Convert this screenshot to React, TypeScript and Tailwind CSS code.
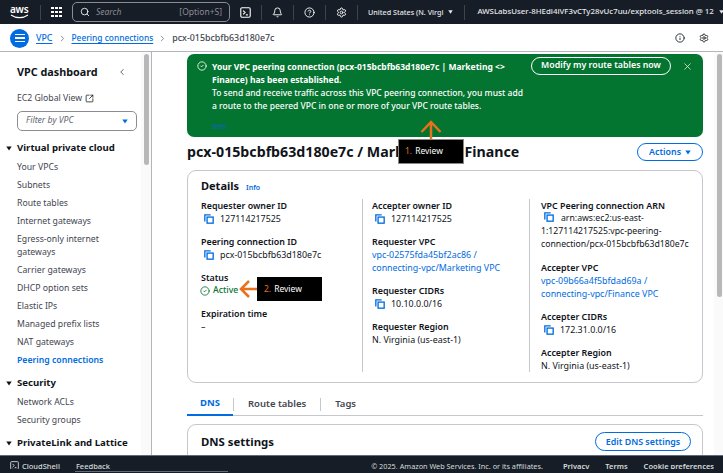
import React from 'react';
import { Bell, ChevronLeft, ChevronRight, CircleCheck, CircleHelp, Info, Search, Settings, SquareArrowOutUpRight, X } from 'lucide-react';

const Caret = ({ className = '' }: { className?: string }) => (
  <svg viewBox="0 0 10 8" className={className} fill="currentColor">
    <path d="M0.5 0.5h9L5 7.5z" />
  </svg>
);

const CopyIcon = () => (
  <svg viewBox="0 0 12 12" className="w-[10px] h-[10px] shrink-0 text-[#006ce0]" fill="none" stroke="currentColor" strokeWidth="1.6">
    <path d="M1 9V1h7" />
    <rect x="3.7" y="3.7" width="7.3" height="7.3" />
  </svg>
);

const TerminalIcon = ({ className = '' }: { className?: string }) => (
  <svg viewBox="0 0 14 14" className={className} fill="none" stroke="currentColor" strokeWidth="1.4">
    <rect x="1" y="1" width="12" height="12" rx="1.5" />
    <path d="M4 4.5 6.5 7 4 9.5M7.5 10H10" />
  </svg>
);

const Label = ({ children }: { children: React.ReactNode }) => (
  <div className="font-semibold leading-[13px] text-[#0f141a]">{children}</div>
);

const Copy = ({ children }: { children: React.ReactNode }) => (
  <div className="flex items-center gap-[6px] pl-[3px] leading-[13px]">
    <CopyIcon />
    <span>{children}</span>
  </div>
);

const Field = ({ label, children }: { label: string; children: React.ReactNode }) => (
  <div className="mb-[10px]">
    <Label>{label}</Label>
    {children}
  </div>
);

const NavLink = ({ children, active }: { children: React.ReactNode; active?: boolean }) => (
  <div className={active ? 'pl-[17px] py-[2.5px] leading-[13px] font-semibold text-[#006ce0]' : 'pl-[17px] py-[2.5px] leading-[13px] text-[#424650]'}>
    {children}
  </div>
);

const NavHead = ({ children }: { children: React.ReactNode }) => (
  <div className="flex items-center gap-[5px] pl-[6px] text-[9.6px] font-bold leading-[14px] text-[#0f141a]">
    <Caret className="w-[6px] h-[5px]" />
    {children}
  </div>
);

function App() {
  return (
    <div className="h-[473px] w-[723px] overflow-hidden flex flex-col bg-white relative font-['Noto_Sans',sans-serif] text-[8.9px] text-[#0f141a]">
      {/* top bar */}
      <div className="h-[24px] shrink-0 bg-[#161d26] flex items-center text-[#d5dbdb]">
        <div className="w-[40px] shrink-0 pl-[10px] leading-none">
          <div className="text-[10px] font-semibold text-white leading-[9px] tracking-tight">aws</div>
          <svg viewBox="0 0 20 5" className="w-[20px] h-[5px] text-white" fill="none" stroke="currentColor" strokeWidth="1.1">
            <path d="M1 1c5 3.5 12 3.5 17 0" />
          </svg>
        </div>
        <div className="w-px h-[15px] shrink-0 bg-[#3d4450]" />
        <div className="w-[31px] shrink-0 pl-[10px]">
          <div className="grid grid-cols-3 gap-[1.5px] w-[11px]">
            {Array.from({ length: 9 }).map((_, i) => (
              <div key={i} className="w-[2.6px] h-[2.6px] bg-white" />
            ))}
          </div>
        </div>
        <div className="w-[158px] h-[20px] shrink-0 border border-[#8c8c94] rounded-[5px] flex items-center px-[7px] text-[#8c8c94] text-[8.5px]">
          <Search className="w-[10px] h-[10px] text-white mr-[6px]" />
          <span className="italic flex-1">Search</span>
          <span>[Option+S]</span>
        </div>
        <div className="flex items-center shrink-0 ml-[10px] text-white">
          <TerminalIcon className="w-[11px] h-[11px]" />
          <div className="w-px h-[15px] bg-[#3d4450] mx-[10px]" />
          <Bell className="w-[11px] h-[11px]" />
          <div className="w-px h-[15px] bg-[#3d4450] mx-[10px]" />
          <CircleHelp className="w-[11px] h-[11px]" />
          <div className="w-px h-[15px] bg-[#3d4450] mx-[10px]" />
          <Settings className="w-[11px] h-[11px]" />
          <div className="w-px h-[15px] bg-[#3d4450] ml-[10px]" />
        </div>
        <div className="ml-[10px] shrink-0 flex items-center font-medium text-[#e6e8ea] whitespace-nowrap">
          <span className="text-[7.2px]">United States (N. Virgi</span>
          <Caret className="w-[5px] h-[4px] ml-[5px]" />
          <div className="w-px h-[15px] bg-[#3d4450] ml-[11px] mr-[12px]" />
          <span className="text-[7.85px]">AWSLabsUser-8HEdi4iVF3vCTy28vUc7uu/exptools_session @ 12</span>
          <Caret className="w-[5px] h-[4px] ml-[5px]" />
        </div>
      </div>

      {/* breadcrumb */}
      <div className="h-[27px] shrink-0 mt-px bg-white border-b border-[#b4b4bb] flex items-center pl-[10px] pr-[14px]">
        <div className="w-[19px] h-[19px] rounded-full bg-[#006ce0] flex flex-col items-center justify-center gap-[2px]">
          <div className="w-[10px] h-[1.5px] bg-white" />
          <div className="w-[10px] h-[1.5px] bg-white" />
          <div className="w-[10px] h-[1.5px] bg-white" />
        </div>
        <span className="ml-[7px] text-[#006ce0] underline underline-offset-2 font-medium">VPC</span>
        <ChevronRight className="w-[9px] h-[9px] mx-[5px] text-[#656871]" />
        <span className="text-[#006ce0] underline underline-offset-2 text-[8.4px] font-medium">Peering connections</span>
        <ChevronRight className="w-[9px] h-[9px] mx-[5px] text-[#656871]" />
        <span className="text-[#424650] font-medium">pcx-015bcbfb63d180e7c</span>
        <div className="flex-1" />
        <Info className="w-[10px] h-[10px] mr-[14px] text-[#0f141a]" />
        <Settings className="w-[10px] h-[10px] text-[#0f141a]" />
      </div>

      <div className="flex-1 min-h-0 flex">
        {/* sidebar */}
        <aside className="w-[152px] shrink-0 border-r border-[#b4b4bb] relative overflow-hidden pt-[12px] text-[8.7px]">
          <div className="absolute right-0 top-0 bottom-0 w-[10px] bg-[#fafafa]" />
          <div className="absolute right-[2px] top-[2px] w-[5px] h-[111px] rounded bg-[#b8b8b8]" />
          <div className="flex items-center pl-[17px] pr-[24px] justify-between text-[10.8px] font-bold leading-[16px] relative">
            VPC dashboard
            <ChevronLeft className="w-[10px] h-[10px] text-[#424650]" />
          </div>
          <div className="pl-[17px] mt-[12px] flex items-center gap-[3px] leading-[13px] text-[#424650]">
            EC2 Global View
            <SquareArrowOutUpRight className="w-[9px] h-[9px] text-[#0f141a]" />
          </div>
          <div className="ml-[17px] mt-[6px] w-[120px] h-[20px] border border-[#8c8c94] rounded-[5px] flex items-center justify-between px-[8px] italic text-[#656871]">
            Filter by VPC
            <Caret className="w-[6px] h-[5px] text-[#006ce0]" />
          </div>
          <div className="mt-[10px] mb-[3px]"><NavHead>Virtual private cloud</NavHead></div>
          <NavLink>Your VPCs</NavLink>
          <NavLink>Subnets</NavLink>
          <NavLink>Route tables</NavLink>
          <NavLink>Internet gateways</NavLink>
          <NavLink>Egress-only internet<br />gateways</NavLink>
          <NavLink>Carrier gateways</NavLink>
          <NavLink>DHCP option sets</NavLink>
          <NavLink>Elastic IPs</NavLink>
          <NavLink>Managed prefix lists</NavLink>
          <NavLink>NAT gateways</NavLink>
          <NavLink active>Peering connections</NavLink>
          <div className="mt-[7px] mb-[3px]"><NavHead>Security</NavHead></div>
          <NavLink>Network ACLs</NavLink>
          <NavLink>Security groups</NavLink>
          <div className="mt-[7px]"><NavHead>PrivateLink and Lattice</NavHead></div>
        </aside>

        {/* main */}
        <main className="flex-1 min-w-0 relative overflow-hidden pl-[35px] pr-[20px] pt-[2px]">
          <div className="absolute right-0 top-0 bottom-0 w-[9px] bg-[#fafafa]" />
          <div className="absolute right-[1px] top-[2px] w-[5px] h-[243px] rounded bg-[#b8b8b8]" />

          {/* flash banner */}
          <div className="h-[83px] rounded-[7px] bg-[#047530] text-white flex pl-[10px] pr-[10px] pt-[6px] relative">
            <CircleCheck className="w-[10px] h-[10px] mt-[1px] shrink-0" />
            <div className="ml-[5px] leading-[13px] text-[8.5px] font-medium whitespace-nowrap">
              <div className="font-bold">Your VPC peering connection (pcx-015bcbfb63d180e7c | Marketing &lt;&gt;<br />Finance) has been established.</div>
              <div>To send and receive traffic across this VPC peering connection, you must add<br />a route to the peered VPC in one or more of your VPC route tables.</div>
              <div className="mt-[8px] text-[#0a66b8] text-[7.5px]">Info</div>
            </div>
            <div className="flex-1" />
            <div className="h-[18px] w-[140px] -mt-[3px] border border-white rounded-full flex items-center justify-center font-semibold text-[8.8px] mr-[11px] whitespace-nowrap">
              Modify my route tables now
            </div>
            <X className="w-[11px] h-[11px] mt-[1px]" strokeWidth={1.5} />
          </div>

          {/* heading */}
          <div className="flex items-center justify-between h-[18px] mt-[6px] mb-[9px]">
            <h1 className="text-[14.2px] font-bold whitespace-nowrap">pcx-015bcbfb63d180e7c / Marketing &lt;&gt; Finance</h1>
            <div className="h-[18px] w-[66px] border border-[#006ce0] rounded-full flex items-center justify-center gap-[4px] text-[#006ce0] font-semibold">
              Actions
              <Caret className="w-[6px] h-[5px]" />
            </div>
          </div>

          {/* details */}
          <section className="h-[213px] border border-[#c6c6cd] rounded-[9px] pt-[7px] pl-[13px] overflow-hidden">
            <div className="flex items-baseline gap-[7px]">
              <h2 className="text-[11px] font-bold leading-[16px]">Details</h2>
              <span className="text-[7px] font-semibold text-[#006ce0]">Info</span>
            </div>
            <div className="grid grid-cols-[161px_169px_170px] mt-[5px] text-[#0f141a]">
              <div>
                <Field label="Requester owner ID"><Copy>127114217525</Copy></Field>
                <Field label="Peering connection ID"><Copy>pcx-015bcbfb63d180e7c</Copy></Field>
                <Field label="Status">
                  <div className="flex items-center gap-[3px] font-medium text-[#047530] text-[8.7px] -ml-px leading-[13px]">
                    <CircleCheck className="w-[10px] h-[10px]" /> Active
                  </div>
                </Field>
                <Field label="Expiration time"><div className="leading-[13px]">–</div></Field>
              </div>
              <div className="border-l border-[#c6c6cd] pl-[9px] h-[173px]">
                <Field label="Accepter owner ID"><Copy>127114217525</Copy></Field>
                <Field label="Requester VPC">
                  <div className="leading-[13px] text-[#006ce0]">vpc-02575fda45bf2ac86 /<br />connecting-vpc/Marketing VPC</div>
                </Field>
                <Field label="Requester CIDRs"><Copy>10.10.0.0/16</Copy></Field>
                <Field label="Requester Region"><div className="leading-[13px]">N. Virginia (us-east-1)</div></Field>
              </div>
              <div className="border-l border-[#c6c6cd] pl-[11px] h-[173px] -ml-[2px] whitespace-nowrap">
                <Field label="VPC Peering connection ARN">
                  <div className="leading-[13px] text-[8.7px]">
                    <span className="inline-block align-[-1px] ml-[3px] mr-[7px]"><CopyIcon /></span>arn:aws:ec2:us-east-<br />1:127114217525:vpc-peering-<br />connection/pcx-015bcbfb63d180e7c
                  </div>
                </Field>
                <Field label="Accepter VPC">
                  <div className="leading-[13px] text-[#006ce0]">vpc-09b66a4f5bfdad69a /<br />connecting-vpc/Finance VPC</div>
                </Field>
                <Field label="Accepter CIDRs"><Copy>172.31.0.0/16</Copy></Field>
                <Field label="Accepter Region"><div className="leading-[13px]">N. Virginia (us-east-1)</div></Field>
              </div>
            </div>
          </section>

          {/* tabs */}
          <div className="mt-[10px] h-[23px] border-b border-[#c6c6cd] flex items-center text-[9.5px] font-semibold text-[#424650]">
            <div className="h-[22px] w-[46px] mb-[-1px] flex items-center justify-center text-[#006ce0] border-b-2 border-[#006ce0] font-bold">DNS</div>
            <div className="w-px h-[13px] bg-[#c6c6cd]" />
            <div className="px-[14px]">Route tables</div>
            <div className="w-px h-[13px] bg-[#c6c6cd]" />
            <div className="px-[14px]">Tags</div>
          </div>

          {/* dns card */}
          <section className="mt-[8px] h-[60px] border border-[#c6c6cd] rounded-[9px] pl-[13px] pr-[11px] pt-[7px] flex items-start justify-between">
            <h2 className="text-[11.4px] font-bold leading-[19px]">DNS settings</h2>
            <div className="h-[19px] w-[96px] border border-[#006ce0] rounded-full flex items-center justify-center text-[#006ce0] font-semibold">
              Edit DNS settings
            </div>
          </section>
        </main>
      </div>

      {/* footer */}
      <div className="absolute left-0 right-0 top-[455px] h-[18px] bg-[#161d26] border-t border-[#5f6b7a]">
        <div className="h-[13px] pt-[5px] overflow-hidden flex items-start text-[7.5px] leading-[10px] text-[#d5dbdb] whitespace-nowrap">
          <TerminalIcon className="w-[9px] h-[9px] ml-[10px] mr-[3px]" />
          <span className="font-medium">CloudShell</span>
          <span className="ml-[16px] font-medium">Feedback</span>
          <div className="flex-1" />
          <span className="text-[7.3px]">© 2025, Amazon Web Services, Inc. or its affiliates.</span>
          <span className="ml-[20px] font-semibold">Privacy</span>
          <span className="ml-[16px] font-semibold">Terms</span>
          <span className="ml-[16px] font-semibold mr-[9px]">Cookie preferences</span>
        </div>
        <div className="absolute left-[75px] top-[15px] w-[153px] h-px bg-[#5f6b7a]" />
      </div>

      {/* review callouts */}
      <div className="absolute left-[398px] top-[139px] w-[66px] h-[25px] bg-black border border-[#888] flex items-center pl-[6px] text-[8.5px] text-white">
        <span className="text-[#e8711a] mr-[3px]">1.</span> Review
      </div>
      <svg viewBox="0 0 22 19" className="absolute left-[420px] top-[120px] w-[22px] h-[19px] text-[#e8711a]" fill="none" stroke="currentColor" strokeWidth="2.5">
        <path d="M11 19V2M1.5 12 11 2l9.5 10" />
      </svg>
      <div className="absolute left-[257px] top-[277px] w-[65px] h-[24px] bg-black flex items-center pl-[7px] text-[8.5px] text-white">
        <span className="text-[#e8711a] mr-[3px]">2.</span> Review
      </div>
      <svg viewBox="0 0 18 20" className="absolute left-[239px] top-[279px] w-[18px] h-[20px] text-[#e8711a]" fill="none" stroke="currentColor" strokeWidth="2.5">
        <path d="M18 10H2M10 2 2 10l8 8" />
      </svg>
    </div>
  );
}

export default App;
